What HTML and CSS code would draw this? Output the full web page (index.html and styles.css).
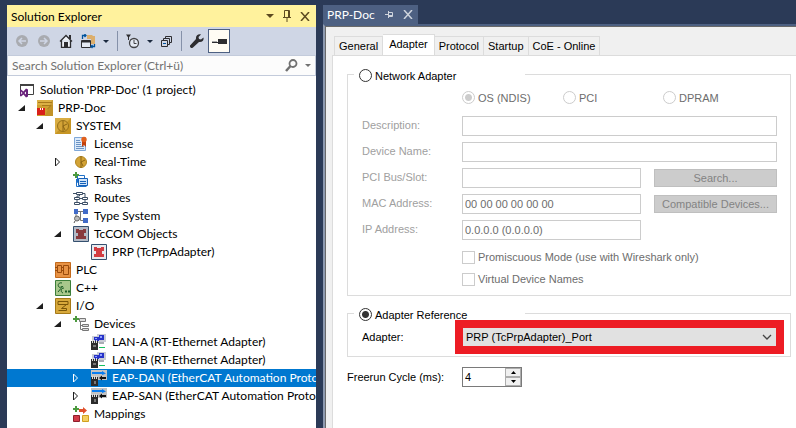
FILE: index.html
```html
<!DOCTYPE html>
<html lang="en">
  <head>
    <meta charset="UTF-8" />
    <meta name="viewport" content="width=device-width, initial-scale=1.0" />
    <title>PRP-Doc</title>
    <link rel="stylesheet" href="styles.css">
  </head>
  <body>
    <!-- shared icons -->
    <svg class="symbols" width="0" height="0">
      <symbol id="open" viewBox="0 0 8 8"><path d="M7 1v6H0z" fill="#1e1e1e" /></symbol>
      <symbol id="closed" viewBox="0 0 8 8"><path d="M1.5 0v8l4-4z" fill="#fff" stroke="#1e1e1e" /></symbol>
      <symbol id="closed-sel" viewBox="0 0 8 8"><path d="M1.5 0v8l4-4z" fill="none" stroke="#fff" /></symbol>
      <symbol id="lan" viewBox="0 0 16 16">
        <path d="M1 2h8v7H1zM6 0h9v8H6z" fill="#c9ccd6" />
        <path d="M3 3h5v4H3zM8 1h5v5H8z" fill="#2632c8" />
        <path d="M9 2h2v2H9zM4 4h2v1H4z" fill="#8fa0ff" />
        <path d="M8 8h5v2H8z" fill="#a9adb5" />
        <path d="M0 7h7v9H0z" fill="#2b2b2b" />
        <path d="M1 6h1v3H1zM3 6h1v3H3zM5 6h1v3H5z" fill="#ddd" />
        <path d="M2 11h3v2H2z" fill="#777" />
        <path d="M8 13h6v1H8z" fill="#16c060" />
      </symbol>
      <symbol id="eap" viewBox="0 0 16 16">
        <path d="M0 0h16v10H0z" fill="#c3c3c3" />
        <path d="M1 2h10V1l4 2.500L11 5V4H1z" fill="#0a7df0" />
        <path d="M15 7h-4V5.500L8 8l3 2.500V9h4z" fill="#111" />
        <path d="M0 7h7v9H0z" fill="#2b2b2b" />
        <path d="M1 6h1v3H1zM3 6h1v3H3zM5 6h1v3H5z" fill="#ddd" />
        <path d="M3 11h2v3H3z" fill="#777" />
      </symbol>
      <symbol id="tccom" viewBox="0 0 16 16">
        <path d="M3 3h3v1h4V3h3v4h-2v3h2v3H3v-3h2V7H3z" />
      </symbol>
    </svg>

    <div class="window">
      <aside class="explorer">
        <header class="title-bar">
          <h1>Solution Explorer</h1>
          <button class="icon-button" aria-label="Window position">
            <svg width="8" height="4" viewBox="0 0 8 4"><path d="M0 0h8L4 4z" fill="#5c4a20" /></svg>
          </button>
          <button class="icon-button" aria-label="Auto hide">
            <svg width="8" height="12" viewBox="0 0 8 12"><path d="M1.500 7V.5h5V7M0 7.500h8M4 7.500V12M5.500.5v7" fill="none" stroke="#5c4a20" /></svg>
          </button>
          <button class="icon-button" aria-label="Close">
            <svg width="10" height="9" viewBox="0 0 10 9"><path d="M1 0l8 9M9 0L1 9" fill="none" stroke="#5c4a20" stroke-width="1.500" /></svg>
          </button>
        </header>

        <div class="toolbar">
          <button class="icon-button" aria-label="Back">
            <svg width="14" height="14" viewBox="0 0 14 14"><circle cx="7" cy="7" r="6" fill="#a9abb0" /><path d="M11 7H4M7 4L4 7l3 3" fill="none" stroke="#cfd6e5" stroke-width="1.500" /></svg>
          </button>
          <button class="icon-button" aria-label="Forward">
            <svg width="14" height="14" viewBox="0 0 14 14"><circle cx="7" cy="7" r="6" fill="#a9abb0" /><path d="M3 7h7M7 4l3 3-3 3" fill="none" stroke="#cfd6e5" stroke-width="1.500" /></svg>
          </button>
          <button class="icon-button" aria-label="Home">
            <svg width="14" height="14" viewBox="0 0 14 14"><path d="M1 7.500L7 1.500l6 6M2.500 6.500v7h9v-7" fill="#f0f3f8" stroke="#2d2d30" stroke-width="1.300" /><path d="M10 1h2v4h-2zM5 8h4v6H5z" fill="#2d2d30" /></svg>
          </button>
          <button class="icon-button" aria-label="Sync with document">
            <svg width="15" height="15" viewBox="0 0 15 15"><path d="M6 1h5l1 1h2v8h-4V5H6z" fill="#dcae6b" /><path d="M.5 6.500h9v7h-9z" fill="#e4e9f2" stroke="#2d2d30" /><path d="M1 7h8v1.500H1z" fill="#2d2d30" /><path d="M1.500 5V1.500H5M3.500 0L5 1.500 3.500 3M13.500 10v2.500H10M11.500 11L10 12.500l1.500 1.500" fill="none" stroke="#00539c" stroke-width="1.300" /></svg>
            <svg class="drop" width="6" height="3" viewBox="0 0 6 3"><path d="M0 0h6L3 3z" fill="#1b293e" /></svg>
          </button>
          <span class="separator"></span>
          <button class="icon-button" aria-label="Pending changes filter">
            <svg width="14" height="15" viewBox="0 0 14 15"><path d="M0 .5h5L2.500 4z" fill="#2d2d30" /><path d="M2 2h1v4H2z" fill="#2d2d30" /><circle cx="8" cy="9" r="4.500" fill="#e4e9f2" stroke="#424245" stroke-width="1.300" /><path d="M8 6v3.500h2.500" fill="none" stroke="#424245" /></svg>
            <svg class="drop" width="6" height="3" viewBox="0 0 6 3"><path d="M0 0h6L3 3z" fill="#1b293e" /></svg>
          </button>
          <button class="icon-button" aria-label="Collapse all">
            <svg width="12" height="12" viewBox="0 0 12 12"><path d="M.5 5.500h6v6h-6zM2.500 5V3.500h6v6H7M4.500 3V1.500h6v6H9" fill="none" stroke="#2d2d30" /><path d="M2 8.500h3" stroke="#00539c" /></svg>
          </button>
          <span class="separator"></span>
          <button class="icon-button" aria-label="Properties">
            <svg width="14" height="14" viewBox="0 0 14 14"><path d="M13.500 3.500l-2.500 2-2-.5-.5-2 2.500-2.500C8.500-.5 5.500 1.500 6 5L.5 11a1.700 1.700 0 0 0 2.500 2.500L9 8c3.500.5 5-2 4.500-4.500z" fill="#2d2d30" /></svg>
          </button>
          <button class="icon-button pressed" aria-label="Preview selected items">
            <svg width="15" height="5" viewBox="0 0 15 5"><path d="M0 3h6V0h9v5H6V4H0z" fill="#2d2d30" /><path d="M0 2.500h5" stroke="#aaa" /></svg>
          </button>
        </div>

        <form class="search">
          <input type="text" placeholder="Search Solution Explorer (Ctrl+ü)" aria-label="Search Solution Explorer" />
          <svg width="13" height="13" viewBox="0 0 13 13"><circle cx="8" cy="4.500" r="3.500" fill="none" stroke="#717171" stroke-width="1.800" /><path d="M5.500 7L1 12" stroke="#717171" stroke-width="2.500" /></svg>
          <svg width="6" height="3" viewBox="0 0 6 3"><path d="M0 0h6L3 3z" fill="#717171" /></svg>
        </form>

        <ul class="tree">
          <li class="root">
            <svg class="icon" viewBox="0 0 16 16"><path d="M1.500 8V2.500h13v10H9" fill="#fff" stroke="#424242" /><path d="M1 2h14v2H1z" fill="#424242" /><path d="M1 8l1-.5 2.500 2L7 6.500l2 1v7l-2 1-2.500-3-2.500 2-1-.5zM2.200 9.500v3L3.500 11zM7 9.500L5.500 11 7 12.500z" fill="#68217a" fill-rule="evenodd" /></svg>
            Solution 'PRP-Doc' (1 project)
          </li>
          <li class="level1">
            <svg class="arrow"><use href="#open" /></svg>
            <svg class="icon" viewBox="0 0 16 16"><path d="M0 0h16v16H0z" fill="#d0a030" /><path d="M0 0h16v5H0z" fill="#dcb044" /><path d="M1 2.500h14M5 5.500h9l-4 4" fill="none" stroke="#a87a1c" /><path d="M15 0h1v16H8z" fill="#ad7e1c" opacity=".4" /><path d="M0 8h8v7H0z" fill="#d9201a" /><path d="M3 8h1v2H3zM5 8h1v2H5z" fill="#fff" /></svg>
            PRP-Doc
          </li>
          <li class="level2">
            <svg class="arrow"><use href="#open" /></svg>
            <svg class="icon" viewBox="0 0 16 16"><path d="M0 0h16v16H0z" fill="#c69524" /><path d="M0 0h16L0 16z" fill="#d9ad43" /><circle cx="8" cy="8" r="5.500" fill="#d3a336" stroke="#96701a" /><path d="M8 3v10M8 8l4-2M8 8l2 4" fill="none" stroke="#8a6414" /></svg>
            SYSTEM
          </li>
          <li class="level3">
            <svg class="icon" viewBox="0 0 16 16"><path d="M1.500 1.500h11v13h-11z" fill="#dceafa" stroke="#7fa8d8" /><path d="M3 4.500h4M3 6.500h5M3 8.500h5M3 10.500h8M3 12.500h8" stroke="#6c94c4" /><path d="M9 5h4v6l-2-2-2 2z" fill="#c2410c" /><circle cx="11" cy="3.500" r="2.700" fill="#e2601c" /></svg>
            License
          </li>
          <li class="level3">
            <svg class="arrow"><use href="#closed" /></svg>
            <svg class="icon" viewBox="0 0 16 16"><circle cx="8" cy="8" r="5.500" fill="#d3a336" stroke="#b0851f" /><path d="M8 2v12M8 8l4-2M8 8l2 4" fill="none" stroke="#8a6414" /></svg>
            Real-Time
          </li>
          <li class="level3">
            <svg class="icon" viewBox="0 0 16 16"><path d="M4.500 3.500h7v7h-7z" fill="#fff" stroke="#1e70c8" /><path d="M3.500 7v7.500h10" fill="none" stroke="#1e70c8" /><path d="M5.500 6.500h9v7h-9z" fill="#cfe3f8" stroke="#1560b8" /><path d="M7 9.500h6M7 11.500h6" stroke="#1560b8" /><path d="M2 0h2v2h2v2H4v2H2V4H0V2h2z" fill="#4c9a3f" /></svg>
            Tasks
          </li>
          <li class="level3">
            <svg class="icon" viewBox="0 0 16 16"><path d="M3.500 2.500h6v2h-6zM1.500 7.500h5v2h-5zM9.500 7.500h5v2h-5zM1.500 12.500h5v2h-5zM9.500 12.500h5v2h-5zM6.500 4.500V6H4v1.500M0 3.500h3.500M9.500 3.500H12v4M6.500 8.500h3M4 9.500v3M12 9.500v3M6.500 13.500h3" fill="none" stroke="#3d4f66" /></svg>
            Routes
          </li>
          <li class="level3">
            <svg class="icon" viewBox="0 0 16 16"><path d="M1 1h4v5H1zM10 1h5v5h-5zM10 10h5v5h-5z" fill="#416bc8" /><path d="M5 3.500h5M7.500 3.500v9H10M3 6v3" fill="none" stroke="#777" /><circle cx="4" cy="10.500" r="2.500" fill="#bbb" stroke="#666" /><path d="M2 13l-1 2" stroke="#555" /></svg>
            Type System
          </li>
          <li class="level3">
            <svg class="arrow"><use href="#open" /></svg>
            <svg class="icon" viewBox="0 0 16 16"><path d="M.5.5h15v15H.5z" fill="#b4bac6" stroke="#35506f" /><use href="#tccom" fill="#88393e" /></svg>
            TcCOM Objects
          </li>
          <li class="level4">
            <svg class="icon" viewBox="0 0 16 16"><path d="M.5.5h15v15H.5z" fill="#e8eaef" stroke="#35506f" /><use href="#tccom" fill="#d23c42" /></svg>
            PRP (TcPrpAdapter)
          </li>
          <li class="level2">
            <svg class="icon" viewBox="0 0 16 16"><path d="M.5.5h15v15H.5z" fill="#e79245" stroke="#c46a1c" /><path d="M2.500 3.500h4v7h-4zM8.500 3.500h5v9h-5zM6.500 5.500h2M6.500 8.500h2M0 5.500h2M0 8.500h2M13.500 6h2" fill="none" stroke="#994b0c" /></svg>
            PLC
          </li>
          <li class="level2">
            <svg class="icon" viewBox="0 0 16 16"><path d="M.5.5h15v15H.5z" fill="#a9c88c" stroke="#3c7f3a" /><path d="M7 3C4 2 2 5 4 7c1 1 2 0 3-1M3 12l5-6M9 8c-3 0-4 4-1 5M10 11.500h2M13 11.500h2M11 10v3M14 10v3" fill="none" stroke="#1d5e28" /></svg>
            C++
          </li>
          <li class="level2">
            <svg class="arrow"><use href="#open" /></svg>
            <svg class="icon" viewBox="0 0 16 16"><path d="M.5.5h15v15H.5z" fill="#d8a93b" stroke="#a67a18" /><path d="M3 3.500h10v3H3zM3.500 12.500h8v-2h-5l5-4" fill="none" stroke="#7a5608" /></svg>
            I/O
          </li>
          <li class="level3">
            <svg class="arrow"><use href="#open" /></svg>
            <svg class="icon" viewBox="0 0 16 16"><path d="M6.500 2.500h6v3h-6zM9.500 8.500h6v2h-6zM9.500 12.500h6v2h-6z" fill="#ddd" stroke="#777" /><path d="M7.500 6v7.500h2M7.500 9.500h2" fill="none" stroke="#777" /><path d="M2 0h2v2h2v2H4v2H2V4H0V2h2z" fill="#4c9a3f" /></svg>
            Devices
          </li>
          <li class="level4">
            <svg class="icon"><use href="#lan" /></svg>
            LAN-A (RT-Ethernet Adapter)
          </li>
          <li class="level4">
            <svg class="icon"><use href="#lan" /></svg>
            LAN-B (RT-Ethernet Adapter)
          </li>
          <li class="level4 selected">
            <svg class="arrow"><use href="#closed-sel" /></svg>
            <svg class="icon"><use href="#eap" /></svg>
            EAP-DAN (EtherCAT Automation Proto
          </li>
          <li class="level4">
            <svg class="arrow"><use href="#closed" /></svg>
            <svg class="icon"><use href="#eap" /></svg>
            EAP-SAN (EtherCAT Automation Proto
          </li>
          <li class="level3">
            <svg class="icon" viewBox="0 0 16 16"><path d="M.5 9.500h6v6h-6z" fill="#d23a48" stroke="#8f1f2c" /><path d="M9.500 9.500h6v6h-6z" fill="#f4cf60" stroke="#d0a020" /><path d="M6 3h4V1l4 3.500L10 8V6H6z" fill="#e0502c" /><path d="M2 0h2v2h2v2H4v2H2V4H0V2h2z" fill="#4c9a3f" /></svg>
            Mappings
          </li>
        </ul>
      </aside>

      <main class="document">
        <div class="document-tab">
          <h2>PRP-Doc</h2>
          <button class="icon-button" aria-label="Pin tab">
            <svg width="8" height="7" viewBox="0 0 8 7"><path d="M0 3.500h3M3.500 0v7M3.500 1.500h4v4h-4M3.500 4.500h4" fill="none" stroke="#ced4dd" /></svg>
          </button>
          <button class="icon-button" aria-label="Close tab">
            <svg width="10" height="9" viewBox="0 0 10 9"><path d="M1 0l8 9M9 0L1 9" fill="none" stroke="#ced4dd" stroke-width="1.500" /></svg>
          </button>
        </div>

        <div class="editor">
          <nav class="tabs">
            <button>General</button>
            <button class="active">Adapter</button>
            <button>Protocol</button>
            <button>Startup</button>
            <button>CoE - Online</button>
          </nav>

          <form class="page">
            <fieldset class="group network">
              <legend><label><input type="radio" name="mode" /> Network Adapter</label></legend>
              <div class="bus-types">
                <label><input type="radio" name="bus" checked disabled /> OS (NDIS)</label>
                <label><input type="radio" name="bus" disabled /> PCI</label>
                <label><input type="radio" name="bus" disabled /> DPRAM</label>
              </div>
              <div class="fields">
                <label for="description">Description:</label>
                <input class="wide" type="text" id="description" disabled />
                <label for="device-name">Device Name:</label>
                <input class="wide" type="text" id="device-name" disabled />
                <label for="pci-slot">PCI Bus/Slot:</label>
                <input type="text" id="pci-slot" disabled />
                <button type="button" disabled>Search...</button>
                <label for="mac">MAC Address:</label>
                <input type="text" id="mac" value="00 00 00 00 00 00" disabled />
                <button type="button" disabled>Compatible Devices...</button>
                <label for="ip">IP Address:</label>
                <input type="text" id="ip" value="0.0.0.0 (0.0.0.0)" disabled />
              </div>
              <div class="checks">
                <label><input type="checkbox" disabled /> Promiscuous Mode (use with Wireshark only)</label>
                <label><input type="checkbox" disabled /> Virtual Device Names</label>
              </div>
            </fieldset>

            <fieldset class="group reference">
              <legend><label><input type="radio" name="mode" checked /> Adapter Reference</label></legend>
              <div class="adapter-row">
                <label for="adapter">Adapter:</label>
                <div class="highlight">
                  <select id="adapter">
                    <option>PRP (TcPrpAdapter)_Port</option>
                  </select>
                  <svg class="chevron" width="10" height="6" viewBox="0 0 10 6"><path d="M1 1l4 4 4-4" fill="none" stroke="#444" stroke-width="1.300" /></svg>
                </div>
              </div>
            </fieldset>

            <div class="cycle">
              <label for="freerun">Freerun Cycle (ms):</label>
              <div class="spinner">
                <input type="text" id="freerun" value="4" />
                <div class="spin-buttons">
                  <button type="button" aria-label="Increase"><svg width="5" height="3" viewBox="0 0 5 3"><path d="M0 3h5L2.500 0z" /></svg></button>
                  <button type="button" aria-label="Decrease"><svg width="5" height="3" viewBox="0 0 5 3"><path d="M0 0h5L2.500 3z" /></svg></button>
                </div>
              </div>
            </div>
          </form>
        </div>
      </main>
    </div>
  </body>
</html>
```

FILE: styles.css
```css
* {
  box-sizing: border-box;
}

body {
  margin: 0;
  overflow: hidden;
  background-color: #2b3a57;
  font-family: Lato, sans-serif;
  font-size: 12px;
  color: #000;
}

button,
input,
select {
  font: inherit;
  color: inherit;
  margin: 0;
}

h1,
h2 {
  margin: 0;
  font-size: 12px;
  font-weight: 400;
}

svg {
  display: block;
  flex: none;
}

.symbols {
  position: absolute;
}

.window {
  display: flex;
  gap: 7px;
  height: 100vh;
  padding: 5px 0 0 7px;
}

.icon-button {
  display: flex;
  align-items: center;
  padding: 0;
  border: none;
  background: none;
}

/* solution explorer */
.explorer {
  display: flex;
  flex-direction: column;
  flex: 0 0 309px;
  min-width: 0;
  background-color: #fff;
  overflow: hidden;
}

.title-bar {
  display: flex;
  align-items: center;
  gap: 9px;
  height: 22px;
  padding: 0 6px 0 4px;
  background-color: #fff29d;
}

.title-bar h1 {
  flex: 1;
}

.toolbar {
  display: flex;
  align-items: center;
  gap: 8px;
  height: 28px;
  padding-left: 8px;
  background-color: #cfd6e5;
}

.drop {
  margin-left: 7px;
}

.separator {
  width: 1px;
  height: 20px;
  background-color: #8591a9;
}

.pressed {
  justify-content: center;
  width: 22px;
  height: 24px;
  margin-left: -4px;
  border: 1px solid #4d6082;
  background-color: #fffcf4;
}

.search {
  display: flex;
  align-items: center;
  gap: 7px;
  height: 21px;
  padding: 0 4px;
  border: 1px solid #c3cbdb;
  background-color: #fcfcfc;
}

.search input {
  flex: 1;
  min-width: 0;
  padding: 0;
  border: none;
  background: none;
  outline: none;
}

.search input::placeholder {
  color: #717171;
}

.tree {
  margin: 0;
  padding: 5px 0 0;
  list-style: none;
}

.tree li {
  display: flex;
  align-items: center;
  height: 18px;
  line-height: 16px;
  white-space: nowrap;
}

.icon {
  width: 16px;
  height: 16px;
  margin-right: 5px;
}

.arrow {
  width: 8px;
  height: 8px;
  margin: 0 11px 0 -19px;
}

.tree .root {
  padding-left: 12px;
}

.tree .level1 {
  padding-left: 30px;
}

.tree .level2 {
  padding-left: 48px;
}

.tree .level3 {
  padding-left: 66px;
}

.tree .level4 {
  padding-left: 84px;
}

.tree .selected {
  background-color: #0078d0;
  color: #fff;
}

/* document */
.document {
  display: flex;
  flex-direction: column;
  flex: 1;
  min-width: 0;
}

.document-tab {
  display: flex;
  align-items: center;
  align-self: flex-start;
  gap: 10px;
  height: 19px;
  padding: 0 5px 0 4px;
  background-color: #4d6082;
  color: #fff;
}

.editor {
  flex: 1;
  padding: 8px 0 0 7px;
  border-top: 2px solid #4d6082;
  border-left: 2px solid #8e9ab0;
  box-shadow: inset 1px 1px #696969;
  background-color: #f0f0f0;
  font-family: "Liberation Sans", Arial, sans-serif;
  font-size: 11px;
}

.tabs {
  display: flex;
  align-items: flex-end;
  height: 21px;
  padding-left: 2px;
}

.tabs button {
  height: 19px;
  padding: 0 4px;
  border: 1px solid #dcdcdc;
  border-bottom: none;
  border-left: none;
  background-color: #f0f0f0;
}

.tabs button:first-child {
  border-left: 1px solid #dcdcdc;
}

.tabs .active {
  height: 21px;
  padding: 0 6px 2px;
  background-color: #fff;
}

.page {
  height: 100%;
  padding: 11px 5px 0 14px;
  border-top: 1px solid #dcdcdc;
  border-left: 1px solid #dcdcdc;
  background-color: #fff;
}

.group {
  min-width: 0;
  margin: 0;
  padding: 0 13px 0 14px;
  border: 1px solid #dcdcdc;
}

legend {
  width: 171px;
  height: 14px;
  margin-left: -8px;
  padding: 2px 0 0 5px;
  line-height: 12px;
}

.page label {
  white-space: nowrap;
}

legend label,
.bus-types label,
.checks label {
  display: flex;
  align-items: center;
  gap: 3px;
}

input[type="radio"],
input[type="checkbox"] {
  appearance: none;
  flex: none;
  width: 13px;
  height: 13px;
  border: 1px solid #333;
  background-color: #fff;
}

input[type="radio"] {
  border-radius: 50%;
}

input[type="radio"]:checked {
  background-image: radial-gradient(circle, #333 3px, transparent 4px);
}

input[type="radio"]:disabled {
  border-color: #ccc;
}

input[type="radio"]:checked:disabled {
  background-image: radial-gradient(circle, #ccc 3px, transparent 4px);
}

.bus-types {
  display: grid;
  grid-template-columns: 101px 100px 1fr;
  margin-top: 10px;
  padding-left: 100px;
  color: #6d6d6d;
}

.fields {
  display: grid;
  grid-template-columns: 100px 1fr 123px;
  grid-auto-rows: 20px;
  row-gap: 6px;
  column-gap: 0;
  margin-top: 12px;
  color: #a0a0a0;
}

.fields label {
  line-height: 18px;
}

.fields input {
  grid-column: 2;
  width: calc(100% - 13px);
  padding: 0 2px;
  border: 1px solid #ccc;
  background-color: #fff;
  color: #6d6d6d;
}

.fields .wide {
  grid-column: 2 / 4;
  width: 100%;
}

.fields button {
  height: 18px;
  margin-top: 1px;
  padding: 0;
  border: 1px solid #bfbfbf;
  background-color: #ccc;
  color: #838383;
}

.checks {
  display: flex;
  flex-direction: column;
  gap: 8px;
  margin: 10px 0 9px;
  padding-left: 100px;
  color: #6d6d6d;
}

.checks label {
  height: 14px;
}

.checks input {
  border-color: #ccc;
}

.reference {
  margin-top: 10px;
  padding: 0 6px 2px 14px;
}

.adapter-row {
  display: flex;
}

.adapter-row label {
  width: 93px;
  line-height: 34px;
}

.highlight {
  flex: 1;
  display: flex;
  position: relative;
  border: 8px solid #ed1c24;
}

.highlight select {
  appearance: none;
  width: 100%;
  height: 18px;
  padding: 0 3px;
  border: none;
  border-radius: 0;
  background-color: #e1e1e1;
}

.chevron {
  position: absolute;
  right: 4px;
  top: 6px;
  pointer-events: none;
}

.cycle {
  display: flex;
  margin-top: 10px;
}

.cycle label {
  width: 115px;
  line-height: 20px;
}

.spinner {
  display: flex;
  width: 60px;
  height: 20px;
  border: 1px solid #7a7a7a;
}

.spinner input {
  flex: 1;
  min-width: 0;
  padding: 0 2px;
  border: none;
  background: none;
}

.spin-buttons {
  display: flex;
  flex-direction: column;
  width: 16px;
}

.spin-buttons button {
  flex: 1;
  display: flex;
  align-items: center;
  justify-content: center;
  min-height: 0;
  padding: 0;
  border: 1px solid #adadad;
  background-color: #f0f0f0;
}
```
